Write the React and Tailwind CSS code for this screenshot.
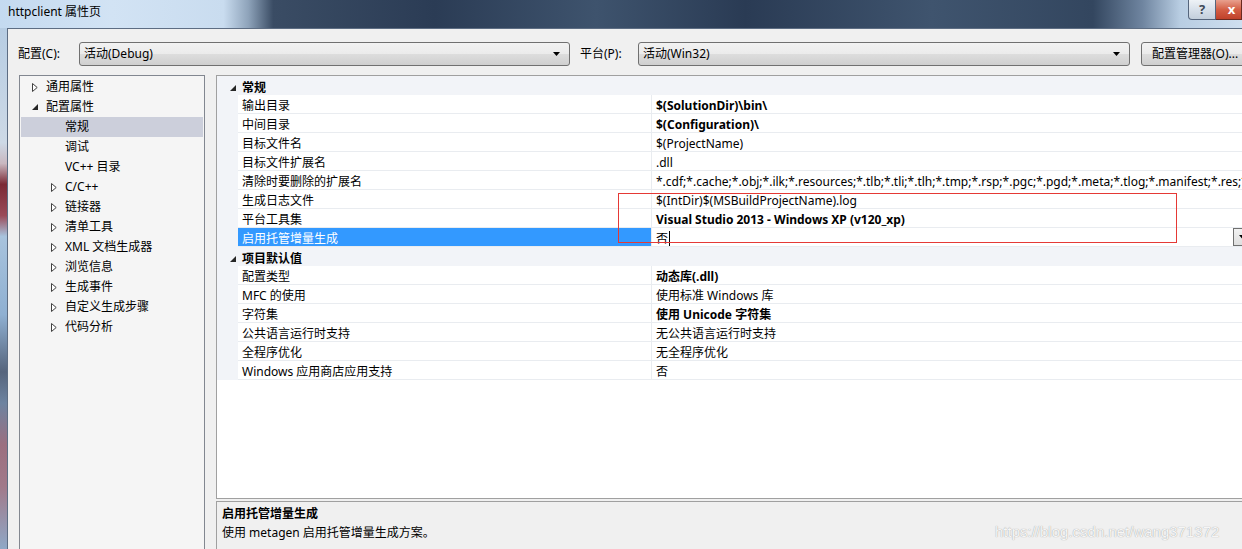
import React from "react";

const tree = [
  { label: "通用属性", level: 0, arrow: "closed" },
  { label: "配置属性", level: 0, arrow: "open" },
  { label: "常规", level: 1, selected: true },
  { label: "调试", level: 1 },
  { label: "VC++ 目录", level: 1 },
  { label: "C/C++", level: 1, arrow: "closed" },
  { label: "链接器", level: 1, arrow: "closed" },
  { label: "清单工具", level: 1, arrow: "closed" },
  { label: "XML 文档生成器", level: 1, arrow: "closed" },
  { label: "浏览信息", level: 1, arrow: "closed" },
  { label: "生成事件", level: 1, arrow: "closed" },
  { label: "自定义生成步骤", level: 1, arrow: "closed" },
  { label: "代码分析", level: 1, arrow: "closed" },
];

const sections = [
  {
    title: "常规",
    rows: [
      ["输出目录", "$(SolutionDir)\\bin\\", true],
      ["中间目录", "$(Configuration)\\", true],
      ["目标文件名", "$(ProjectName)"],
      ["目标文件扩展名", ".dll"],
      ["清除时要删除的扩展名", "*.cdf;*.cache;*.obj;*.ilk;*.resources;*.tlb;*.tli;*.tlh;*.tmp;*.rsp;*.pgc;*.pgd;*.meta;*.tlog;*.manifest;*.res;*.pc"],
      ["生成日志文件", "$(IntDir)$(MSBuildProjectName).log"],
      ["平台工具集", "Visual Studio 2013 - Windows XP (v120_xp)", true],
      ["启用托管增量生成", "否", false, true],
    ],
  },
  {
    title: "项目默认值",
    rows: [
      ["配置类型", "动态库(.dll)", true],
      ["MFC 的使用", "使用标准 Windows 库"],
      ["字符集", "使用 Unicode 字符集", true],
      ["公共语言运行时支持", "无公共语言运行时支持"],
      ["全程序优化", "无全程序优化"],
      ["Windows 应用商店应用支持", "否"],
    ],
  },
];

const ClosedArrow = () => (
  <svg width="6" height="9" viewBox="0 0 6 9">
    <path d="M0.5 0.5L5.2 4.5L0.5 8.5Z" fill="white" stroke="#404040" strokeWidth="1" />
  </svg>
);

const OpenArrow = () => (
  <svg width="6" height="6" viewBox="0 0 6 6">
    <path d="M6 0V6H0Z" fill="#262626" />
  </svg>
);

const ComboArrow = () => (
  <svg width="7" height="4" viewBox="0 0 7 4">
    <path d="M0 0H7L3.5 4Z" fill="#000" />
  </svg>
);

const Combo = ({ text, className }) => (
  <div
    className={`flex h-[24px] shrink-0 items-center rounded-[3px] border border-[#707070] bg-[linear-gradient(180deg,#f2f2f2_0%,#ebebeb_50%,#dddddd_51%,#cfcfcf_100%)] pl-[4px] pr-[9px] ${className}`}
  >
    <span className="flex-1 leading-[16px]">{text}</span>
    <ComboArrow />
  </div>
);

export default function App() {
  return (
    <div className="relative h-[549px] w-[1242px] overflow-hidden bg-[#f0f0f0] text-[12px] text-black font-['Noto_Sans','Noto_Sans_CJK_SC',sans-serif]">
      {/* title bar */}
      <div className="relative h-[28px] bg-[linear-gradient(90deg,#c4daf0_0%,#d2e3f4_9%,#c9dcef_18%,#8ea3ba_20%,#3a4c64_22%,#2b3c55_35%,#3e536d_48%,#2a3b54_60%,#3f546e_75%,#33465f_88%,#6f85a0_92%,#b8cde2_95%,#cfdff0_100%)]">
        <div className="pl-[8px] pt-[4px] leading-[16px]">httpclient 属性页</div>
        <div className="absolute right-0 top-0 flex">
          <div className="flex h-[20px] w-[28px] items-center justify-center rounded-bl-[4px] border border-t-0 border-[#55657c] bg-[linear-gradient(180deg,#eef2f6_0%,#d7e0ea_50%,#c3cfdc_100%)] text-[13px] font-bold leading-none text-[#3f4a58]">
            ?
          </div>
          <div className="flex h-[20px] w-[26px] items-center justify-center border border-l-0 border-t-0 border-[#6a2a20] bg-[linear-gradient(180deg,#e8a08e_0%,#d45f45_50%,#c0412a_100%)] pl-[6px] text-[13px] font-bold leading-none text-white">
            x
          </div>
        </div>
      </div>

      <div className="flex h-[521px]">
        {/* left glass frame */}
        <div className="w-[7px] shrink-0 bg-[linear-gradient(180deg,#b7cde3_0%,#cdd9e6_22%,#c9b8c0_26%,#7b2a36_30%,#9a4a58_36%,#a8c3dd_40%,#8fb0d2_55%,#56657d_66%,#6d83a0_72%,#9b6f80_80%,#a1798a_88%,#8fa8c6_100%)]" />

        {/* dialog body */}
        <div className="min-w-0 flex-1 overflow-hidden border-l border-t border-[#5d6d83]">
          {/* config row */}
          <div className="mt-[13px] flex items-center pl-[10px]">
            <span className="w-[61px] shrink-0 leading-[16px]">配置(C):</span>
            <Combo text="活动(Debug)" className="w-[491px]" />
            <span className="ml-[10px] w-[58px] shrink-0 leading-[16px]">平台(P):</span>
            <Combo text="活动(Win32)" className="w-[492px]" />
            <div className="ml-[11px] flex h-[24px] w-[110px] shrink-0 items-center rounded-[3px] border border-[#707070] bg-[linear-gradient(180deg,#f2f2f2_0%,#ebebeb_50%,#dddddd_51%,#cfcfcf_100%)] pl-[10px] leading-[16px] whitespace-nowrap">
              配置管理器(O)...
            </div>
          </div>

          {/* main area */}
          <div className="mt-[9px] flex pl-[11px]">
            {/* tree */}
            <div className="h-[480px] w-[186px] shrink-0 border border-[#828790] bg-[#f5f5f5] p-[1px]">
              {tree.map((item) => (
                <div
                  key={item.label}
                  className={`flex h-[20px] items-center ${item.selected ? "bg-[#cccfdb]" : ""} ${item.level === 0 ? "pl-[10px]" : "pl-[29px]"}`}
                >
                  <span className="flex w-[15px] items-center pl-[1px]">
                    {item.arrow === "closed" && <ClosedArrow />}
                    {item.arrow === "open" && <OpenArrow />}
                  </span>
                  <span className="leading-[16px]">{item.label}</span>
                </div>
              ))}
            </div>

            {/* right column */}
            <div className="ml-[11px] flex w-[1040px] shrink-0 flex-col">
              {/* property grid */}
              <div className="h-[424px] border border-r-0 border-[#a0a0a0] bg-white">
                {sections.map((sec) => (
                  <div key={sec.title}>
                    <div className="flex h-[19px] items-center bg-[#f2f4f8] pt-[4px]">
                      <span className="flex w-[25px] justify-end pr-[6px]">
                        <OpenArrow />
                      </span>
                      <span className="font-bold leading-[16px]">{sec.title}</span>
                    </div>
                    {sec.rows.map(([name, value, bold, selected]) => (
                      <div key={name} className="flex h-[19px]">
                        <div className="w-[21px] shrink-0 bg-[#f2f4f8]" />
                        <div
                          className={`flex w-[414px] shrink-0 items-center border-b border-r border-[#e9ecf0] pl-[4px] pt-[4px] ${selected ? "bg-[#3399ff] text-white" : ""}`}
                        >
                          <span className="leading-[16px]">{name}</span>
                        </div>
                        <div className="flex min-w-0 flex-1 items-center overflow-hidden border-b border-[#e9ecf0] pl-[4px]">
                          <span className={`whitespace-nowrap pt-[3px] leading-[16px] ${bold ? "font-bold" : ""}`}>{value}</span>
                          {selected && (
                            <>
                              <span className="ml-[1px] mt-[2px] h-[15px] w-[1px] bg-black" />
                              <div className="ml-auto mr-[5px] flex h-[18px] w-[18px] items-center justify-center border border-[#707070] bg-[linear-gradient(180deg,#f2f2f2_0%,#dedede_100%)]">
                                <ComboArrow />
                              </div>
                            </>
                          )}
                        </div>
                      </div>
                    ))}
                  </div>
                ))}
              </div>

              {/* description */}
              <div className="mt-[2px] h-[60px] border-l border-t border-[#a0a0a0] bg-[#f0f0f0] pl-[5px] pt-[2px]">
                <div className="font-bold leading-[19px]">启用托管增量生成</div>
                <div className="leading-[19px]">使用 metagen 启用托管增量生成方案。</div>
              </div>
            </div>
          </div>
        </div>
      </div>

      {/* red annotation box */}
      <div className="absolute left-[618px] top-[193px] h-[50px] w-[559px] border border-[#e53935]" />

      {/* watermark */}
      <div className="absolute left-[995px] top-[522px] text-[15px] leading-[20px] text-[#f6f6f6] font-['Liberation_Sans',sans-serif] [text-shadow:0_0_1px_#8c8c8c]">
        https://blog.csdn.net/wang371372
      </div>
    </div>
  );
}
